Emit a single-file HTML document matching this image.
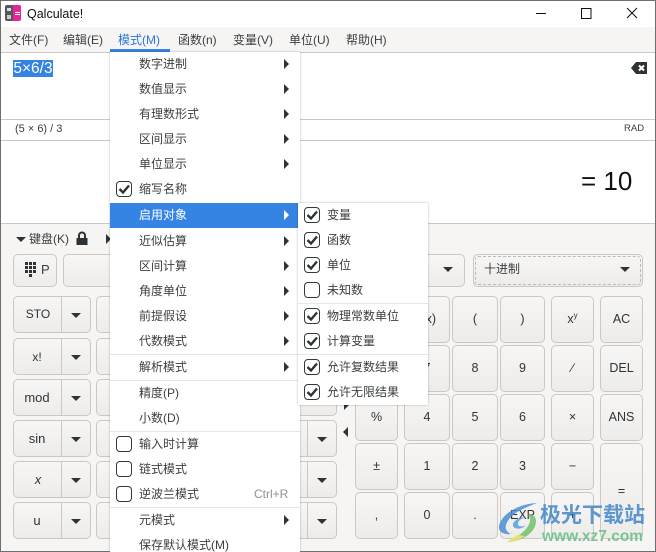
<!DOCTYPE html>
<html><head><meta charset="utf-8"><style>
html,body{margin:0;padding:0}
#w{position:relative;width:656px;height:552px;overflow:hidden;background:#f6f5f4;font:12px/16px "Liberation Sans","Noto Sans CJK SC",sans-serif;color:#2e3436}
#w div,#w svg{position:absolute}
.t{white-space:nowrap}
.b{box-sizing:border-box;border:1px solid #cdc7c2;border-radius:5px;background:linear-gradient(#f7f6f5,#eeecea);text-align:center;font-size:12.5px}
.c{transform:translate(-50%,-50%);white-space:nowrap;text-align:center}
.a{width:0;height:0;border-left:5px solid transparent;border-right:5px solid transparent;border-top:5px solid #2e3436}
.r{width:0;height:0;border-top:5px solid transparent;border-bottom:5px solid transparent;border-left:5px solid #2e3436;left:284px}
.s{left:0;height:1px;background:#e8e6e3}
.k{box-sizing:border-box;width:16px;height:16px;border:1.3px solid #33383a;border-radius:4px;background:#fff}
.k svg{left:1px;top:1px}
.m{left:139px;color:#3b3f40}
.n{left:327px;color:#3b3f40}
</style></head><body><div id="w">
<!-- title bar -->
<div style="left:0;top:0;width:656px;height:27px;background:#fff"></div>
<div style="left:5px;top:5px;width:8px;height:16px;background:#55575a;border-radius:2px 0 0 2px"></div>
<div style="left:13px;top:5px;width:8px;height:16px;background:#e6259c;border-radius:0 2px 2px 0"></div>
<div style="left:7px;top:8px;width:4px;height:3px;background:#ddd"></div>
<div style="left:7px;top:15px;width:4px;height:4px;background:#ccc"></div>
<div style="left:15px;top:12px;width:5px;height:1px;background:#fff"></div>
<div style="left:15px;top:14px;width:5px;height:1px;background:#fff"></div>
<div class="t" style="left:27px;top:6px;font-size:12.5px;color:#111">Qalculate!</div>
<svg style="left:530px;top:4px" width="115" height="20" fill="none" stroke="#111" stroke-width="1"><path d="M6 9.500h10M51.500 4.500h9.500v10h-9.500zM97 4l10 10M107 4l-10 10"/></svg>
<!-- menu bar -->
<div style="left:0;top:27px;width:656px;height:25px;background:#f6f5f4"></div>
<div style="left:0;top:52px;width:656px;height:1px;background:#cdc7c2"></div>
<div class="t" style="left:9px;top:32px;color:#3b3f40">文件(F)</div>
<div class="t" style="left:63px;top:32px;color:#3b3f40">编辑(E)</div>
<div class="t" style="left:118px;top:32px;color:#2a76d8">模式(M)</div>
<div style="left:110px;top:49px;width:60px;height:3px;background:#3584e4"></div>
<div class="t" style="left:178px;top:32px;color:#3b3f40">函数(n)</div>
<div class="t" style="left:233px;top:32px;color:#3b3f40">变量(V)</div>
<div class="t" style="left:289px;top:32px;color:#3b3f40">单位(U)</div>
<div class="t" style="left:346px;top:32px;color:#3b3f40">帮助(H)</div>
<!-- entry -->
<div style="left:0;top:53px;width:656px;height:66px;background:#fff"></div>
<div class="t" style="left:13px;top:60px;width:40px;height:17px;background:#3584e4;color:#fff;font-size:15.5px;line-height:17px;text-align:center">5×6/3</div>
<svg style="left:630px;top:60px" width="18" height="16"><path d="M1 8L6 2h11v12H6z" fill="#2e3436"/><path d="M9 5.500l5 5M14 5.500l-5 5" stroke="#fff" stroke-width="2"/></svg>
<div style="left:0;top:119px;width:656px;height:1px;background:#cdc7c2"></div>
<div style="left:0;top:120px;width:656px;height:20px;background:#fff"></div>
<div class="t" style="left:15px;top:121px;font-size:11px;color:#3b3f40">(5 × 6) / 3</div>
<div class="t" style="left:624px;top:121px;font-size:9.500px;color:#3b3f40">RAD</div>
<div style="left:0;top:140px;width:656px;height:1px;background:#cdc7c2"></div>
<!-- result -->
<div style="left:0;top:141px;width:656px;height:82px;background:#fff"></div>
<div class="t" style="left:581px;top:166px;font-size:26px;line-height:30px;color:#111">= 10</div>
<div style="left:0;top:223px;width:656px;height:1px;background:#cdc7c2"></div>
<!-- keypad header -->
<div class="a" style="left:16px;top:237px"></div>
<div class="t" style="left:29px;top:231px;color:#3b3f40">键盘(K)</div>
<svg style="left:75px;top:231px" width="14" height="15"><path d="M4 7V4.500a3 3 0 0 1 6 0V7" fill="none" stroke="#2e3436" stroke-width="2"/><rect x="1.500" y="7" width="11" height="7" fill="#2e3436"/></svg>
<div class="r" style="left:106px;top:234px"></div>
<!-- top row -->
<div class="b" style="left:13px;top:254px;width:44px;height:33px"></div>
<svg style="left:25px;top:262px" width="12" height="16" fill="#2e3436"><path d="M0 0h3v3H0zM4 0h3v3H4zM8 0h3v3H8zM0 4h3v3H0zM4 4h3v3H4zM8 4h3v3H8zM0 8h3v3H0zM4 8h3v3H4zM8 8h3v3H8zM4 12h3v3H4z"/></svg>
<div class="t" style="left:41px;top:262px;font-size:13px;color:#3b3f40">P</div>
<div class="b" style="left:63px;top:254px;width:402px;height:33px"></div>
<div class="a" style="left:443px;top:267px"></div>
<div class="b" style="left:473px;top:254px;width:170px;height:33px"></div>
<div style="box-sizing:border-box;left:475px;top:256px;width:166px;height:29px;border:1px dashed #bdb9b4;border-radius:3px"></div>
<div class="t" style="left:484px;top:261px;color:#3b3f40">十进制</div>
<div class="a" style="left:620px;top:267px"></div>
<!-- left stack -->
<div class="b" style="left:13px;top:296px;width:78px;height:37px"></div><div style="left:61px;top:296px;width:1px;height:37px;background:#cdc7c2"></div><div class="c" style="left:38px;top:314px">STO</div><div class="a" style="left:71px;top:313px"></div>
<div class="b" style="left:13px;top:338px;width:78px;height:37px"></div><div style="left:61px;top:338px;width:1px;height:37px;background:#cdc7c2"></div><div class="c" style="left:37px;top:357px">x!</div><div class="a" style="left:71px;top:355px"></div>
<div class="b" style="left:13px;top:379px;width:78px;height:37px"></div><div style="left:61px;top:379px;width:1px;height:37px;background:#cdc7c2"></div><div class="c" style="left:37px;top:398px;font-size:13px">mod</div><div class="a" style="left:71px;top:396px"></div>
<div class="b" style="left:13px;top:420px;width:78px;height:37px"></div><div style="left:61px;top:420px;width:1px;height:37px;background:#cdc7c2"></div><div class="c" style="left:37px;top:439px;font-size:13px">sin</div><div class="a" style="left:71px;top:437px"></div>
<div class="b" style="left:13px;top:461px;width:78px;height:37px"></div><div style="left:61px;top:461px;width:1px;height:37px;background:#cdc7c2"></div><div class="c" style="left:38px;top:480px;font-style:italic;font-size:13px">x</div><div class="a" style="left:71px;top:478px"></div>
<div class="b" style="left:13px;top:502px;width:78px;height:37px"></div><div style="left:61px;top:502px;width:1px;height:37px;background:#cdc7c2"></div><div class="c" style="left:37px;top:521px;font-size:13px">u</div><div class="a" style="left:71px;top:519px"></div>
<!-- second stack -->
<div class="b" style="left:96px;top:296px;width:241px;height:37px"></div>
<div class="b" style="left:96px;top:338px;width:241px;height:37px"></div>
<div class="b" style="left:96px;top:379px;width:241px;height:37px"></div>
<div class="b" style="left:96px;top:420px;width:241px;height:37px"></div><div style="left:307px;top:420px;width:1px;height:37px;background:#cdc7c2"></div><div class="a" style="left:317px;top:437px"></div>
<div class="b" style="left:96px;top:461px;width:241px;height:37px"></div><div style="left:307px;top:461px;width:1px;height:37px;background:#cdc7c2"></div><div class="a" style="left:317px;top:478px"></div>
<div class="b" style="left:96px;top:502px;width:241px;height:37px"></div><div style="left:307px;top:502px;width:1px;height:37px;background:#cdc7c2"></div><div class="a" style="left:317px;top:519px"></div>
<div style="left:343px;top:427px;width:0;height:0;border-top:5px solid transparent;border-bottom:5px solid transparent;border-right:5px solid #2e3436"></div>
<div style="left:344px;top:400px;width:0;height:0;border-top:5px solid transparent;border-bottom:5px solid transparent;border-left:5px solid #2e3436"></div>
<!-- grid -->
<div class="b" style="left:355px;top:296px;width:43px;height:47px"></div>
<div class="b" style="left:404px;top:296px;width:46px;height:47px;line-height:45px">f(x)</div>
<div class="b" style="left:452px;top:296px;width:46px;height:47px;line-height:45px">(</div>
<div class="b" style="left:500px;top:296px;width:45px;height:47px;line-height:45px">)</div>
<div class="b" style="left:551px;top:296px;width:43px;height:47px;line-height:45px">x<sup style="font-size:8px;line-height:0">y</sup></div>
<div class="b" style="left:600px;top:296px;width:43px;height:47px;line-height:45px">AC</div>
<div class="b" style="left:355px;top:345px;width:43px;height:47px"></div>
<div class="b" style="left:404px;top:345px;width:46px;height:47px;line-height:45px">7</div>
<div class="b" style="left:452px;top:345px;width:46px;height:47px;line-height:45px">8</div>
<div class="b" style="left:500px;top:345px;width:45px;height:47px;line-height:45px">9</div>
<div class="b" style="left:551px;top:345px;width:43px;height:47px;line-height:45px">∕</div>
<div class="b" style="left:600px;top:345px;width:43px;height:47px;line-height:45px">DEL</div>
<div class="b" style="left:355px;top:394px;width:43px;height:47px;line-height:45px">%</div>
<div class="b" style="left:404px;top:394px;width:46px;height:47px;line-height:45px">4</div>
<div class="b" style="left:452px;top:394px;width:46px;height:47px;line-height:45px">5</div>
<div class="b" style="left:500px;top:394px;width:45px;height:47px;line-height:45px">6</div>
<div class="b" style="left:551px;top:394px;width:43px;height:47px;line-height:45px">×</div>
<div class="b" style="left:600px;top:394px;width:43px;height:47px;line-height:45px">ANS</div>
<div class="b" style="left:355px;top:443px;width:43px;height:47px;line-height:45px">±</div>
<div class="b" style="left:404px;top:443px;width:46px;height:47px;line-height:45px">1</div>
<div class="b" style="left:452px;top:443px;width:46px;height:47px;line-height:45px">2</div>
<div class="b" style="left:500px;top:443px;width:45px;height:47px;line-height:45px">3</div>
<div class="b" style="left:551px;top:443px;width:43px;height:47px;line-height:45px">−</div>
<div class="b" style="left:600px;top:443px;width:43px;height:96px;line-height:94px">=</div>
<div class="b" style="left:355px;top:492px;width:43px;height:47px;line-height:45px">,</div>
<div class="b" style="left:404px;top:492px;width:46px;height:47px;line-height:45px">0</div>
<div class="b" style="left:452px;top:492px;width:46px;height:47px;line-height:45px">.</div>
<div class="b" style="left:500px;top:492px;width:45px;height:47px;line-height:45px">EXP</div>
<div class="b" style="left:551px;top:492px;width:43px;height:47px;line-height:45px">+</div>
<!-- watermark -->
<svg style="left:497px;top:501px;opacity:.85" width="44" height="43"><path d="M40 2C20 3 4 14 2 25c-1 6 5 9 12 8C7 30 7 24 13 17 19 10 30 6 40 2z" fill="#4a8fd8"/><path d="M10 41c14 0 29-9 29-21 0-5-4-7-9-6 4 2 4 6 1 11-5 8-13 12-21 16z" fill="#6fc26b"/><path d="M10 41c6 0 12-2 18-6l-8-1z" fill="#e8e05a"/><path d="M16 23c2-5 9-8 13-6-5 0-8 3-8 6 0 3 5 3 8 1-4 5-14 5-13-1z" fill="#5aa0e0"/></svg>
<div class="t" style="left:540px;top:503px;font-size:21px;line-height:26px;font-weight:bold;color:#4f8fcf;opacity:.92">极光下载站</div>
<div class="t" style="left:542px;top:528px;font-size:15.500px;line-height:18px;font-weight:bold;color:#6cc08a;opacity:.9">www.xz7.com</div>
<!-- window border -->
<div style="left:0;top:0;width:656px;height:1px;background:#6f6f6f"></div>
<div style="left:0;top:0;width:1px;height:552px;background:#6f6f6f"></div>
<div style="left:655px;top:0;width:1px;height:552px;background:#6f6f6f"></div>
<div style="left:0;top:551px;width:656px;height:1px;background:#6f6f6f"></div>
<!-- main menu -->
<div style="left:110px;top:52px;width:190px;height:500px;background:#fff;box-shadow:0 0 2px rgba(0,0,0,.3)">
<div style="left:0;top:151px;width:189px;height:25px;background:#3584e4"></div>
<div class="s" style="top:302px;width:190px"></div>
<div class="s" style="top:328px;width:190px"></div>
<div class="s" style="top:379px;width:190px"></div>
<div class="s" style="top:455px;width:190px"></div>
</div>
<div class="t m" style="top:56px">数字进制</div><div class="r" style="top:59px"></div>
<div class="t m" style="top:81px">数值显示</div><div class="r" style="top:84px"></div>
<div class="t m" style="top:106px">有理数形式</div><div class="r" style="top:109px"></div>
<div class="t m" style="top:131px">区间显示</div><div class="r" style="top:134px"></div>
<div class="t m" style="top:156px">单位显示</div><div class="r" style="top:159px"></div>
<div class="k" style="left:116px;top:181px"><svg width="12" height="12"><path d="M1.500 6l3.500 3.500L11 2.500" fill="none" stroke="#2e3436" stroke-width="2.400"/></svg></div><div class="t m" style="top:181px">缩写名称</div>
<div class="t m" style="top:207px;color:#fff">启用对象</div><div class="r" style="top:210px;border-left-color:#fff"></div>
<div class="t m" style="top:233px">近似估算</div><div class="r" style="top:236px"></div>
<div class="t m" style="top:258px">区间计算</div><div class="r" style="top:261px"></div>
<div class="t m" style="top:283px">角度单位</div><div class="r" style="top:286px"></div>
<div class="t m" style="top:308px">前提假设</div><div class="r" style="top:311px"></div>
<div class="t m" style="top:333px">代数模式</div><div class="r" style="top:336px"></div>
<div class="t m" style="top:359px">解析模式</div><div class="r" style="top:362px"></div>
<div class="t m" style="top:385px">精度(P)</div>
<div class="t m" style="top:410px">小数(D)</div>
<div class="k" style="left:116px;top:436px"></div><div class="t m" style="top:436px">输入时计算</div>
<div class="k" style="left:116px;top:461px"></div><div class="t m" style="top:461px">链式模式</div>
<div class="k" style="left:116px;top:486px"></div><div class="t m" style="top:486px">逆波兰模式</div><div class="t" style="left:254px;top:486px;color:#8e9295">Ctrl+R</div>
<div class="t m" style="top:512px">元模式</div><div class="r" style="top:515px"></div>
<div class="t m" style="top:537px">保存默认模式(M)</div>
<!-- sub menu -->
<div style="left:298px;top:203px;width:130px;height:202px;background:#fff;box-shadow:0 0 2px rgba(0,0,0,.3)">
<div class="s" style="top:100px;width:130px"></div>
<div class="s" style="top:151px;width:130px"></div>
</div>
<div class="k" style="left:304px;top:207px"><svg width="12" height="12"><path d="M1.500 6l3.500 3.500L11 2.500" fill="none" stroke="#2e3436" stroke-width="2.400"/></svg></div><div class="t n" style="top:207px">变量</div>
<div class="k" style="left:304px;top:232px"><svg width="12" height="12"><path d="M1.500 6l3.500 3.500L11 2.500" fill="none" stroke="#2e3436" stroke-width="2.400"/></svg></div><div class="t n" style="top:232px">函数</div>
<div class="k" style="left:304px;top:257px"><svg width="12" height="12"><path d="M1.500 6l3.500 3.500L11 2.500" fill="none" stroke="#2e3436" stroke-width="2.400"/></svg></div><div class="t n" style="top:257px">单位</div>
<div class="k" style="left:304px;top:282px"></div><div class="t n" style="top:282px">未知数</div>
<div class="k" style="left:304px;top:308px"><svg width="12" height="12"><path d="M1.500 6l3.500 3.500L11 2.500" fill="none" stroke="#2e3436" stroke-width="2.400"/></svg></div><div class="t n" style="top:308px">物理常数单位</div>
<div class="k" style="left:304px;top:333px"><svg width="12" height="12"><path d="M1.500 6l3.500 3.500L11 2.500" fill="none" stroke="#2e3436" stroke-width="2.400"/></svg></div><div class="t n" style="top:333px">计算变量</div>
<div class="k" style="left:304px;top:359px"><svg width="12" height="12"><path d="M1.500 6l3.500 3.500L11 2.500" fill="none" stroke="#2e3436" stroke-width="2.400"/></svg></div><div class="t n" style="top:359px">允许复数结果</div>
<div class="k" style="left:304px;top:384px"><svg width="12" height="12"><path d="M1.500 6l3.500 3.500L11 2.500" fill="none" stroke="#2e3436" stroke-width="2.400"/></svg></div><div class="t n" style="top:384px">允许无限结果</div>
</div></body></html>
